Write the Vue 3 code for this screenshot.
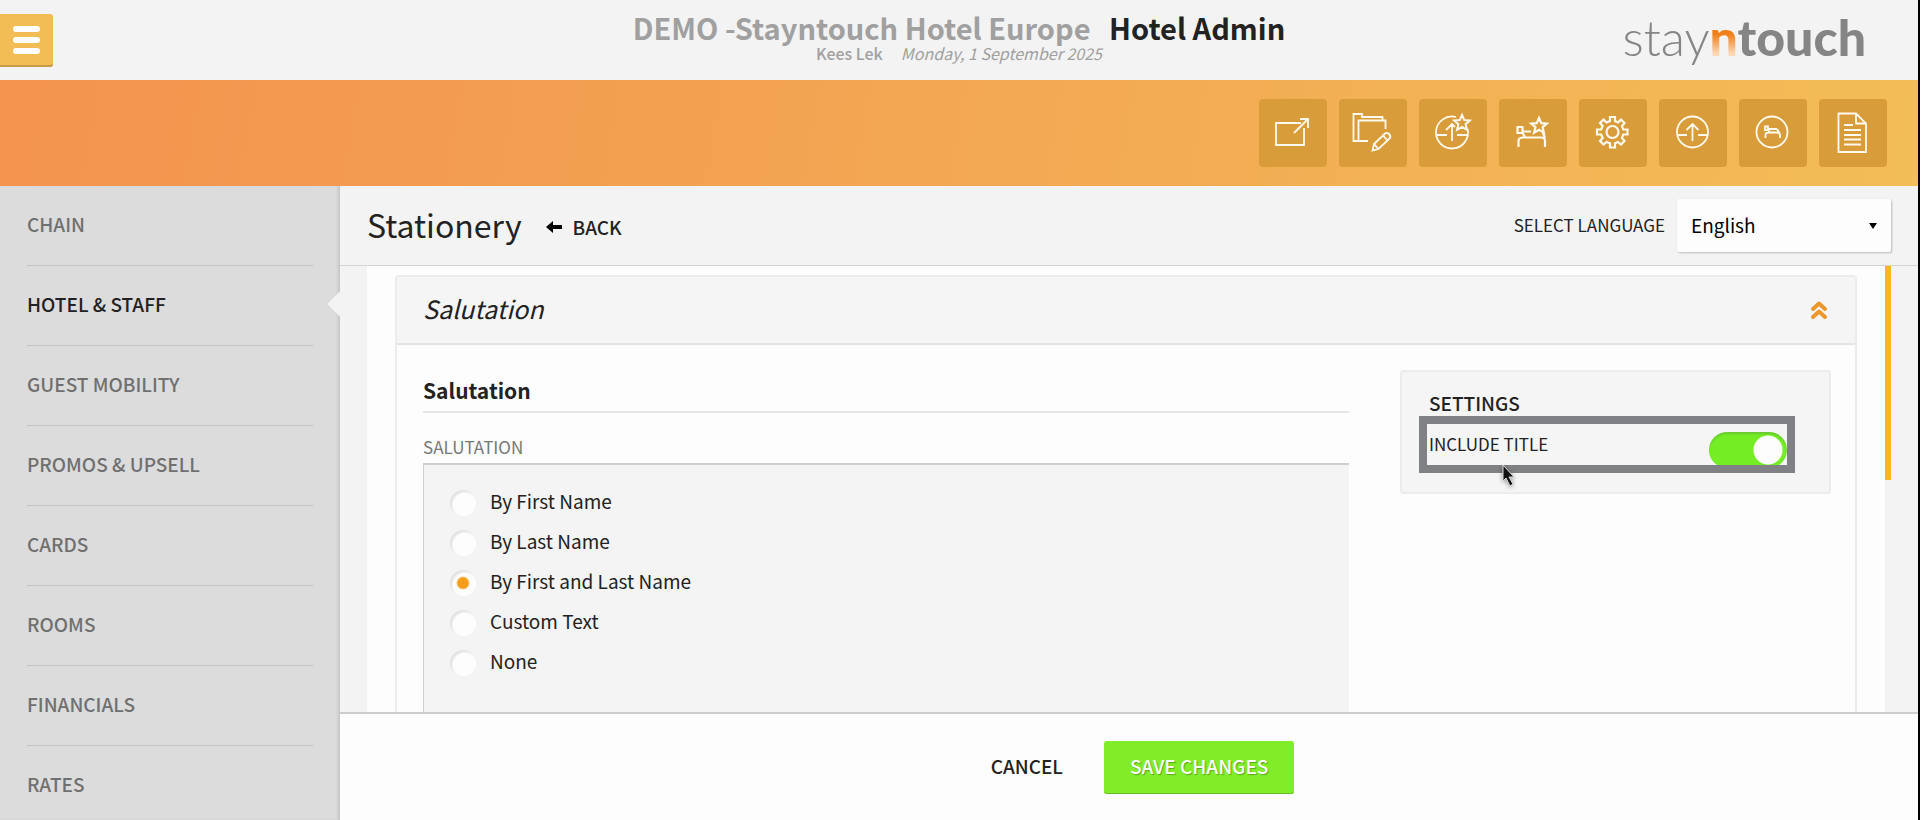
<script setup>
import { ref } from 'vue'

const menu = ['CHAIN', 'HOTEL & STAFF', 'GUEST MOBILITY', 'PROMOS & UPSELL', 'CARDS', 'ROOMS', 'FINANCIALS', 'RATES']
const activeItem = 'HOTEL & STAFF'

const star = 'M0-8L2.3-2.9L7.8-2.4L3.6 1.2L4.9 6.8L0 3.9L-4.9 6.8L-3.6 1.2L-7.8-2.4L-2.3-2.9Z'

const shortcuts = [
  { label: 'Open in new window', paths: ['M42 24H17V46H45V29', 'M35 34L49 20M41 20H49V29'] },
  {
    label: 'Edit folder',
    paths: [
      'M29 42H14.5V15H23V18H43.500V21.500H19.500V42M43.500 18V21.500H46.500V30',
      'M33.500 51.500L35 45L46 34.500Q48 33 50 35Q52.500 37.500 50.500 39.500L39.500 50ZM44 36.500L48.500 41.500M35 45L39.500 50',
    ],
  },
  {
    label: 'Upgrade favourites',
    paths: ['M37 18A16 16 0 1 0 48.600 30', 'M18 36H28M38 36H48M33 42V25M27 31L33 25L36 28'],
    star: 'translate(43 24)',
  },
  {
    label: 'Room favourites',
    paths: ['M18.500 28H23.500V34H18.500ZM24 32.500H32M23.500 34L26 38M19.500 48V42Q19.500 38.500 24 38.500H42Q46 38.500 46 42V48M44 34L46 39'],
    star: 'translate(40 27)',
    heavy: true,
  },
  {
    label: 'Settings',
    heavy: true,
    paths: [
      'M31 18H36V22L39 23.500L42 20.500L45.500 24L43 27L44.200 30.500H48.500V35.500H44.200L43 39L45.500 42L42 45.500L39 43L36 44.200V48.500H31V44.200L27.500 43L24.500 45.500L21 42L23.700 39L22.200 35.500H18V30.500H22.200L23.700 27L21 24L24.500 20.500L27.500 23.500L31 22Z',
      'M39.500 33A6 6 0 1 1 27.500 33A6 6 0 1 1 39.500 33Z',
    ],
  },
  { label: 'Upload', paths: ['M49 33A15.500 15.500 0 1 1 18 33A15.500 15.500 0 1 1 49 33Z', 'M18 36H28M39 36H49M33.500 42V25M27.500 31L33.500 25L39.500 31'] },
  { label: 'Rooms', paths: ['M48.500 33A15.500 15.500 0 1 1 17.500 33A15.500 15.500 0 1 1 48.500 33Z', 'M26 27.500H29V31H26ZM29 30H38M29 31L31 33.500M26.500 39V36Q26.500 33.500 29.500 33.500H38Q41 33.500 41 36V39M38 30L40.500 34'] },
  { label: 'Reports', paths: ['M37 14.500H19.500V53H47V24.500ZM37 14.500V24.500H47', 'M25 26H34M25 31H42M25 36H42M25 40.500H42M25 45.500H42'] },
]

const options = ['By First Name', 'By Last Name', 'By First and Last Name', 'Custom Text', 'None']
const salutation = ref('By First and Last Name')
const language = ref('English')
const includeTitle = ref(true)
</script>

<template>
  <div class="app">
    <header class="top">
      <button class="menu-button" aria-label="Menu"><i></i><i></i><i></i></button>
      <div class="titles">
        <h1><span>DEMO -Stayntouch Hotel Europe</span> Hotel Admin</h1>
        <p><b>Kees Lek</b><em>Monday, 1 September 2025</em></p>
      </div>
      <div class="logo"><span class="thin">stay</span><span class="n">n</span><span class="heavy">touch</span></div>
    </header>

    <nav class="shortcuts" aria-label="Shortcuts">
      <button v-for="s in shortcuts" :key="s.label" :aria-label="s.label">
        <svg viewBox="0 0 68 68" :class="{ bold: s.heavy }">
          <path v-for="d in s.paths" :key="d" :d="d" />
          <path v-if="s.star" class="star" :d="star" :transform="s.star" />
        </svg>
      </button>
    </nav>

    <div class="body">
      <nav class="side" aria-label="Settings sections">
        <a v-for="m in menu" :key="m" href="#" :class="{ active: m === activeItem }"><span>{{ m }}</span></a>
      </nav>

      <main>
        <div class="page-head">
          <h2>Stationery</h2>
          <a class="back" href="#">
            <svg viewBox="0 0 16 12"><path d="M0 6L7 0V4H16V8H7V12Z" /></svg>BACK
          </a>
          <label class="lang-label" for="language">SELECT LANGUAGE</label>
          <div class="select">
            <select id="language" v-model="language"><option>English</option></select>
            <svg viewBox="0 0 8 6"><path d="M0 0H8L4 6Z" /></svg>
          </div>
        </div>

        <div class="scroll">
          <div class="sheet">
            <section class="card">
              <header class="card-head">
                <h3>Salutation</h3>
                <button aria-label="Collapse">
                  <svg viewBox="0 0 16 18"><path d="M2 8L8 2.500L14 8M2 16L8 10.500L14 16" /></svg>
                </button>
              </header>
              <div class="card-body">
                <div class="form">
                  <h4>Salutation</h4>
                  <fieldset>
                    <legend>SALUTATION</legend>
                    <div class="options">
                      <label v-for="o in options" :key="o">
                        <input v-model="salutation" type="radio" name="salutation" :value="o" /><span>{{ o }}</span>
                      </label>
                    </div>
                  </fieldset>
                </div>
                <aside class="settings">
                  <h5>SETTINGS</h5>
                  <div class="setting">
                    <label for="include-title">INCLUDE TITLE</label>
                    <input id="include-title" v-model="includeTitle" type="checkbox" />
                    <div class="focus-frame"></div>
                    <svg class="pointer" viewBox="0 0 14 24">
                      <path d="M2 1V17L5 14L9 22L12 20L8 13H13Z" />
                    </svg>
                  </div>
                </aside>
              </div>
            </section>
          </div>
          <div class="thumb"></div>
        </div>

        <footer class="actions">
          <button class="cancel">CANCEL</button>
          <button class="save">SAVE CHANGES</button>
        </footer>
      </main>
    </div>
  </div>
</template>

<style>
body { margin: 0; background: #f3f3f3; }
</style>

<style scoped>
* { box-sizing: border-box; }
.app {
  height: 100vh;
  display: flex;
  flex-direction: column;
  overflow: hidden;
  border-right: 2px solid #000;
  background: #f3f3f3;
  color: #222;
  font-family: "Noto Sans CJK SC", "Noto Sans", sans-serif;
  font-size: 19px;
  line-height: 24px;
}
h1, h2, h3, h4, h5, p, fieldset { margin: 0; padding: 0; border: 0; }
button, select { font: inherit; color: inherit; border: 0; padding: 0; cursor: pointer; }
a { color: inherit; text-decoration: none; }
svg { display: block; }

.top {
  flex: none;
  height: 80px;
  display: grid;
  grid-template-columns: 1fr auto 1fr;
  align-items: center;
}
.menu-button {
  width: 53px;
  height: 53px;
  display: flex;
  flex-direction: column;
  justify-content: center;
  align-items: center;
  gap: 5px;
  background: #f3bd55;
  border-radius: 0 3px 3px 0;
  box-shadow: inset 0 -2px #c69a47;
}
.menu-button i { width: 27px; height: 6px; border-radius: 3px; background: #fff; }
.titles { text-align: center; padding-bottom: 6px; }
h1 { font-size: 29px; line-height: 32px; font-weight: 700; }
h1 span { color: #a0a0a0; margin-right: 12px; }
.titles p { font-size: 16px; line-height: 20px; color: #a0a0a0; }
.titles b { font-weight: 500; margin-right: 18px; }
.logo {
  justify-self: end;
  margin-right: 52px;
  padding-bottom: 6px;
  font-family: Lato, sans-serif;
  font-size: 50px;
  line-height: 56px;
  color: #858585;
}
.thin { font-weight: 300; }
.heavy { font-weight: 900; }
.n {
  font-weight: 900;
  background: linear-gradient(#ef7f1a 45%, #fbd9b8 78%);
  background-clip: text;
  color: transparent;
}

.shortcuts {
  flex: none;
  height: 106px;
  padding: 0 31px 0 0;
  display: flex;
  justify-content: flex-end;
  align-items: center;
  gap: 12px;
  background: linear-gradient(100deg, #f3934e, #f3a352 40%, #f3bd57);
}
.shortcuts button { width: 68px; height: 68px; border-radius: 4px; background: #d99c3b; }
.shortcuts path { fill: none; stroke: #fffaf0; stroke-width: 1.8; }
.shortcuts .bold path { stroke-width: 2.2; }
.shortcuts .star { fill: #d99c3b; stroke-width: 2; }

.body { flex: 1; min-height: 0; display: flex; }
.side {
  flex: none;
  width: 340px;
  padding: 0 27px;
  overflow: hidden;
  background: #dcdcdc;
  box-shadow: inset -3px 0 3px -1px #c4c4c4;
  position: relative;
}
.side a {
  display: flex;
  align-items: center;
  height: 80px;
  padding-bottom: 4px;
  border-bottom: 1px solid #c4c4c4;
  color: #707070;
  font-weight: 500;
}
.side a.active { color: #222; }
.side a.active::after {
  content: "";
  position: absolute;
  right: -9px;
  width: 18px;
  height: 18px;
  background: #f3f3f3;
  transform: rotate(45deg);
}

main { flex: 1; min-width: 0; display: flex; flex-direction: column; }
.page-head {
  flex: none;
  height: 80px;
  padding: 0 27px;
  display: flex;
  align-items: center;
  border-bottom: 1px solid #d4d4d4;
}
h2 { font-size: 32px; line-height: 40px; font-weight: 400; padding-bottom: 4px; }
.back { display: flex; align-items: center; gap: 11px; margin-left: 24px; padding-top: 2px; font-weight: 500; }
.back svg { width: 16px; height: 12px; }
.lang-label { margin-left: auto; margin-right: 12px; padding-bottom: 2px; font-size: 17px; }
.select { position: relative; }
.select select {
  appearance: none;
  width: 214px;
  height: 53px;
  padding: 0 14px 2px;
  background: #fdfdfd;
  color: #000;
  line-height: 32px;
  border-radius: 2px;
  box-shadow: 1px 1px 2px #bbb;
}
.select svg { position: absolute; right: 14px; top: 24px; width: 8px; height: 6px; pointer-events: none; }

.scroll { flex: 1; min-height: 0; overflow: hidden; display: flex; padding: 0 27px; }
.sheet { flex: 1; min-width: 0; padding: 9px 28px 0; background: #fdfdfd; }
.thumb { flex: none; width: 6px; height: 214px; background: #f9b522; }
.card { border: 2px solid #ececec; border-bottom: 0; border-radius: 4px 4px 0 0; min-height: 600px; }
.card-head {
  height: 68px;
  padding: 0 26px;
  display: flex;
  align-items: center;
  justify-content: space-between;
  background: #f5f5f5;
  border-bottom: 2px solid #e4e4e4;
}
h3 { font-size: 25px; line-height: 32px; font-weight: 400; font-style: italic; padding-bottom: 4px; }
.card-head button { margin-right: 2px; background: none; }
.card-head svg { width: 16px; height: 18px; }
.card-head path { fill: none; stroke: #ec982c; stroke-width: 4; stroke-linecap: round; stroke-linejoin: round; }
.card-body { display: flex; gap: 51px; padding: 25px 24px 0 26px; }
.form { flex: 1; min-width: 0; }
h4 { font-size: 21px; line-height: 32px; font-weight: 700; padding: 4px 0 5px; border-bottom: 2px solid #e6e6e6; }
legend { padding: 22px 0 4px; font-size: 17px; line-height: 24px; color: #777; }
.options {
  min-height: 400px;
  padding: 18px 26px;
  background: #f4f4f4;
  border: solid #cfcfcf;
  border-width: 2px 0 0 1px;
}
.options label { display: flex; align-items: center; gap: 14px; height: 40px; }
.options span { padding-bottom: 4px; }
.options input {
  appearance: none;
  width: 26px;
  height: 26px;
  margin: 0;
  border-radius: 50%;
  background: #fdfdfd;
  box-shadow: inset 2px 2px 2px #e0e0e0;
}
.options input:checked { background: radial-gradient(circle, #f59c1a 0 5px, #fdfdfd 7px); }

.settings {
  flex: none;
  width: 431px;
  height: 124px;
  padding: 19px 42px 0 27px;
  background: #f5f5f5;
  border: 2px solid #ececec;
  border-radius: 4px;
}
h5 { font-size: 19px; line-height: 24px; font-weight: 500; }
.setting { position: relative; display: flex; justify-content: space-between; margin-top: 15px; height: 36px; font-size: 17px; line-height: 28px; }
.setting input {
  appearance: none;
  width: 78px;
  height: 36px;
  margin: 2px 0 0;
  border-radius: 18px;
  background: radial-gradient(circle at 59px 18px, #fdfdfd 14px, transparent 15px), #74ed24;
  box-shadow: inset 0 2px 2px #6bc932;
}
.focus-frame { position: absolute; inset: -14px -8px -7px -10px; border: 8px solid #808184; pointer-events: none; }
.pointer { position: absolute; left: 72px; top: 34px; width: 14px; height: 24px; filter: drop-shadow(0 1px 2px #0006); }
.pointer path { fill: #111; stroke: #ddd; stroke-width: 1; }

.actions {
  flex: none;
  height: 108px;
  padding-left: 27px;
  display: flex;
  justify-content: center;
  align-items: center;
  gap: 41px;
  background: #fdfdfd;
  border-top: 2px solid #cdcdcd;
}
.actions button { font-size: 19px; font-weight: 500; padding-bottom: 2px; }
.cancel { background: none; }
.actions .save {
  height: 53px;
  padding: 0 26px 2px;
  border-radius: 3px;
  background: #80ed28;
  color: #fff;
  box-shadow: inset 0 -1px #67bd24;
  text-shadow: 1px 1px 1px #58a51d;
}
</style>
